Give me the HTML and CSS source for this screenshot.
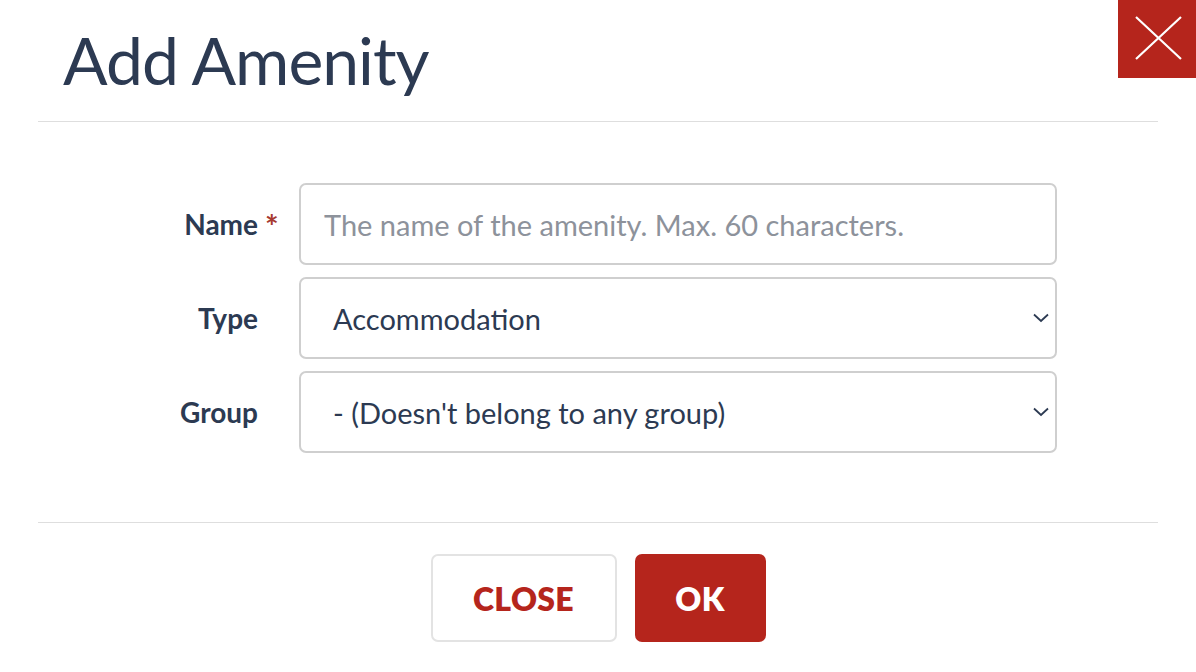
FILE: index.html
```html
<!DOCTYPE html>
<html>
<head>
<meta charset="utf-8">
<link rel="stylesheet" href="styles.css">
</head>
<body>
<div class="modal">
  <div class="header">
    <h1 class="title">Add Amenity</h1>
    <button class="x-btn" aria-label="Close">
      <svg width="78" height="78" viewBox="0 0 78 78"><path d="M18 17 L63 59 M63 17 L18 59" stroke="#fff" stroke-width="2.2" fill="none"/></svg>
    </button>
  </div>
  <form class="form">
    <label class="label">Name<span class="req">*</span></label>
    <div class="field"><span class="placeholder">The name of the amenity. Max. 60 characters.</span></div>
    <label class="label">Type</label>
    <div class="field select"><span class="value">Accommodation</span>
      <svg class="chev" width="16" height="10" viewBox="0 0 16 10"><path d="M1 1.5 L8 8 L15 1.5" stroke="#2c3a52" stroke-width="1.8" fill="none"/></svg></div>
    <label class="label">Group</label>
    <div class="field select"><span class="value">- (Doesn't belong to any group)</span>
      <svg class="chev" width="16" height="10" viewBox="0 0 16 10"><path d="M1 1.5 L8 8 L15 1.5" stroke="#2c3a52" stroke-width="1.8" fill="none"/></svg></div>
  </form>
  <div class="footer">
    <button class="btn btn-close">CLOSE</button>
    <button class="btn btn-ok">OK</button>
  </div>
</div>
</body>
</html>
```
FILE: styles.css
```css
html, body {
  margin: 0;
  padding: 0;
  background: #fff;
}
body {
  font-family: "Lato", "Open Sans", sans-serif;
  color: #2c3a52;
}
.modal {
  width: 1196px;
  height: 672px;
  padding: 0 38px;
  box-sizing: border-box;
}
.header {
  height: 122px;
  border-bottom: 1px solid #dedede;
  box-sizing: border-box;
  padding-left: 25px;
  display: flex;
  align-items: flex-start;
}
.title {
  margin: 22px 0 0 0;
  font-size: 66px;
  font-weight: 400;
  line-height: 76px;
  letter-spacing: -1px;
  color: #2c3a52;
}
.x-btn {
  position: absolute;
  top: 0;
  right: 0;
  width: 78px;
  height: 78px;
  padding: 0;
  border: none;
  background: #b5251c;
  display: block;
}
.x-btn svg { display: block; }
.form {
  display: grid;
  grid-template-columns: 220px 758px;
  column-gap: 41px;
  row-gap: 12px;
  padding-top: 61px;
  height: 401px;
  box-sizing: border-box;
  border-bottom: 1px solid #dedede;
  align-content: start;
}
.label {
  position: relative;
  text-align: right;
  font-weight: 700;
  font-size: 28px;
  line-height: 82px;
  height: 82px;
}
.req {
  position: absolute;
  left: 227px;
  top: 3px;
  color: #a73a30;
  font-size: 32px;
  font-weight: 700;
}
.field {
  height: 82px;
  box-sizing: border-box;
  border: 2px solid #cfcfcf;
  border-radius: 7px;
  display: flex;
  align-items: center;
  font-size: 29px;
}
.placeholder {
  color: #8d929b;
  padding-left: 23px;
}
.value {
  padding-left: 32px;
  flex: 1;
}
.chev {
  margin-right: 6px;
}
.footer {
  display: flex;
  justify-content: center;
  gap: 18px;
  padding-top: 31px;
}
.btn {
  height: 88px;
  border-radius: 7px;
  font-family: "Lato", "Open Sans", sans-serif;
  font-weight: 800;
  font-size: 32px;
  letter-spacing: 0.3px;
  padding: 0;
}
.btn-close {
  width: 186px;
  background: #fff;
  border: 2px solid #e3e3e3;
  color: #b5251c;
}
.btn-ok {
  width: 131px;
  background: #b5251c;
  border: none;
  color: #fff;
}
```
